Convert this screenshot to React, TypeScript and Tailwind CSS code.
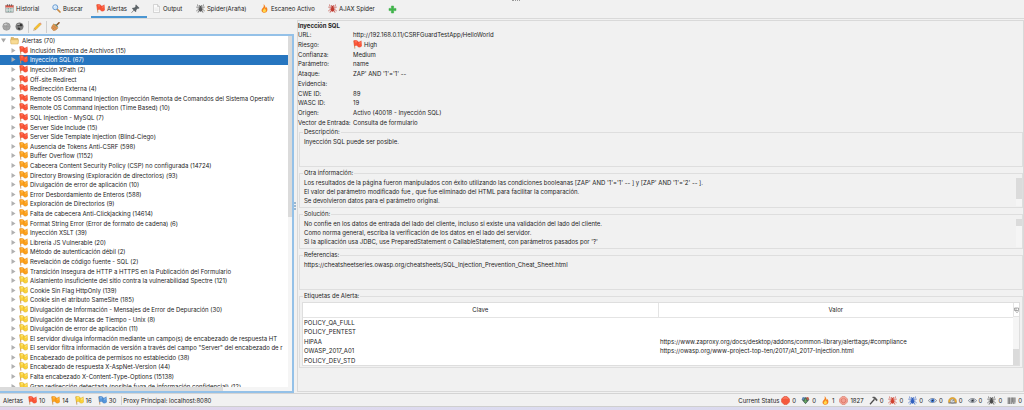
import React, { useState } from 'react';

type Level = 'high' | 'medium' | 'low' | 'info';

const flagColors: Record<Level, { fill: string; dark: string; light: string }> = {
  high: { fill: '#fb5537', dark: '#e0472e', light: '#ff8a70' },
  medium: { fill: '#fda21d', dark: '#dc8616', light: '#ffc766' },
  low: { fill: '#fbd23a', dark: '#d0a420', light: '#fff0a0' },
  info: { fill: '#5596dc', dark: '#3a6fae', light: '#9cc6f2' },
};

const alerts: { name: string; level: Level }[] = [
  { name: 'Inclusión Remota de Archivos (15)', level: 'high' },
  { name: 'Inyección SQL (67)', level: 'high' },
  { name: 'Inyección XPath (2)', level: 'high' },
  { name: 'Off-site Redirect', level: 'high' },
  { name: 'Redirección Externa (4)', level: 'high' },
  { name: 'Remote OS Command Injection (Inyección Remota de Comandos del Sistema Operativ', level: 'high' },
  { name: 'Remote OS Command Injection (Time Based) (10)', level: 'high' },
  { name: 'SQL Injection - MySQL (7)', level: 'high' },
  { name: 'Server Side Include (15)', level: 'high' },
  { name: 'Server Side Template Injection (Blind-Ciego)', level: 'high' },
  { name: 'Ausencia de Tokens Anti-CSRF (598)', level: 'medium' },
  { name: 'Buffer Overflow (1152)', level: 'medium' },
  { name: 'Cabecera Content Security Policy (CSP) no configurada (14724)', level: 'medium' },
  { name: 'Directory Browsing (Exploración de directorios) (93)', level: 'medium' },
  { name: 'Divulgación de error de aplicación (10)', level: 'medium' },
  { name: 'Error Desbordamiento de Enteros (588)', level: 'medium' },
  { name: 'Exploración de Directorios (9)', level: 'medium' },
  { name: 'Falta de cabecera Anti-Clickjacking (14614)', level: 'medium' },
  { name: 'Format String Error (Error de formato de cadena) (6)', level: 'medium' },
  { name: 'Inyección XSLT (39)', level: 'medium' },
  { name: 'Librería JS Vulnerable (20)', level: 'medium' },
  { name: 'Método de autenticación débil (2)', level: 'medium' },
  { name: 'Revelación de código fuente - SQL (2)', level: 'medium' },
  { name: 'Transición Insegura de HTTP a HTTPS en la Publicación del Formulario', level: 'medium' },
  { name: 'Aislamiento insuficiente del sitio contra la vulnerabilidad Spectre (121)', level: 'low' },
  { name: 'Cookie Sin Flag HttpOnly (139)', level: 'low' },
  { name: 'Cookie sin el atributo SameSite (185)', level: 'low' },
  { name: 'Divulgación de Información - Mensajes de Error de Depuración (30)', level: 'low' },
  { name: 'Divulgación de Marcas de Tiempo - Unix (8)', level: 'low' },
  { name: 'Divulgación de error de aplicación (11)', level: 'low' },
  { name: 'El servidor divulga información mediante un campo(s) de encabezado de respuesta HT', level: 'low' },
  { name: 'El servidor filtra información de versión a través del campo "Server" del encabezado de r', level: 'low' },
  { name: 'Encabezado de política de permisos no establecido (38)', level: 'low' },
  { name: 'Encabezado de respuesta X-AspNet-Version (44)', level: 'low' },
  { name: 'Falta encabezado X-Content-Type-Options (15138)', level: 'low' },
  { name: 'Gran redirección detectada (posible fuga de información confidencial) (12)', level: 'low' },
];

const details = [
  { label: 'URL:', value: 'http://192.168.0.11/CSRFGuardTestApp/HelloWorld' },
  { label: 'Riesgo:', value: 'High', flag: true },
  { label: 'Confianza:', value: 'Medium' },
  { label: 'Parámetro:', value: 'name' },
  { label: 'Ataque:', value: "ZAP' AND '1'='1' --" },
  { label: 'Evidencia:', value: '' },
  { label: 'CWE ID:', value: '89' },
  { label: 'WASC ID:', value: '19' },
  { label: 'Origen:', value: 'Activo (40018 - Inyección SQL)' },
  { label: 'Vector de Entrada:', value: 'Consulta de formulario' },
];

const tags = [
  { key: 'POLICY_QA_FULL', value: '' },
  { key: 'POLICY_PENTEST', value: '' },
  { key: 'HIPAA', value: 'https://www.zaproxy.org/docs/desktop/addons/common-library/alerttags/#compliance' },
  { key: 'OWASP_2017_A01', value: 'https://owasp.org/www-project-top-ten/2017/A1_2017-Injection.html' },
  { key: 'POLICY_DEV_STD', value: '' },
];

const Flag = ({ level }: { level: Level }) => {
  const c = flagColors[level];
  return (
    <svg viewBox="0 0 18 18" className="w-[9px] h-[9px] shrink-0">
      <path d="M.8 1.5 L2.8 1 L4.8 17 L2.8 17.5 Z" fill="#c99a6a" />
      <path d="M1.5 1.5 C4.5 0 8 .5 9.8 2.5 L10.8 12.5 C8 10.5 5.5 10.5 2.8 12 Z" fill={c.fill} stroke={c.dark} strokeWidth=".6" />
      <path d="M9.6 3.5 C12 4.5 14.5 3.5 16.5 1.5 L17.6 12 C15 14.5 12 15 9.6 13.5 Z" fill={c.fill} stroke={c.dark} strokeWidth=".6" />
      <path d="M4 4 C5.5 3.2 7 3.4 8 4 M12 6.5 C13.5 6.5 14.5 6 15.5 5.3" fill="none" stroke={c.light} strokeWidth="1.6" />
    </svg>
  );
};

const Spider = ({ color }: { color: string }) => (
  <svg viewBox="0 0 18 18" className="w-[9px] h-[9px] shrink-0">
    <g stroke={color} strokeWidth="1.3" fill="none">
      <path d="M7 8 L4 5 L3 1 M11 8 L14 5 L15 1 M7 9 L3 7.5 L.5 6 M11 9 L15 7.5 L17.5 6" />
      <path d="M7 11 L3 12 L.5 14 M11 11 L15 12 L17.5 14 M8 12 L5 14 L4 17.5 M10 12 L13 14 L14 17.5 M7.5 5 L6.5 2 M10.5 5 L11.5 2" />
    </g>
    <ellipse cx="9" cy="11" rx="3.4" ry="4.6" fill={color} />
    <circle cx="9" cy="6" r="2.4" fill={color} />
  </svg>
);

const Flame = () => (
  <svg viewBox="0 0 18 18" className="w-[9px] h-[9px] shrink-0">
    <path d="M7 .5 C12 4 9.5 6 12 8 C12.5 7 12.5 6 12.5 5.5 C17 11 14.5 17.5 9 17.5 C3 17.5 1.5 12 5 8.5 C8 5.5 8 3 7 .5 Z" fill="#f5821f" />
    <path d="M9 8 C11 11 13 12 11.5 15 C10 17.5 6 17 5.5 14 C5.2 11.5 8.5 11 9 8 Z" fill="#ffd84a" />
  </svg>
);

const Eye = ({ color }: { color: string }) => (
  <svg viewBox="0 0 18 18" className="w-[9px] h-[9px] shrink-0">
    <path d="M.8 9.5 C4 3.5 14 3.5 17.2 9.5 C14 14 4 14 .8 9.5 Z" fill="#e9eef4" stroke="#6e7681" strokeWidth="1.5" />
    <circle cx="9" cy="9" r="4" fill={color} />
    <circle cx="9" cy="9" r="1.6" fill="#151b26" />
    <circle cx="7.7" cy="7.5" r="1" fill="#fff" />
  </svg>
);

const CalendarIcon = () => (
  <svg viewBox="0 0 18 18" className="w-[9px] h-[9px] shrink-0">
    <rect x="1" y="2.5" width="16" height="14.5" rx="1" fill="#e8e8e8" stroke="#8b8b8b" />
    <rect x="1" y="2.5" width="16" height="4.5" fill="#d65a4c" />
    <path d="M5 .5 V4 M9 .5 V4 M13 .5 V4" stroke="#555" strokeWidth="1.5" />
    <path d="M3 9 H15 M3 12 H15 M3 15 H15" stroke="#5e8f86" strokeWidth="1.7" strokeDasharray="2 1.3" />
  </svg>
);

const SearchIcon = () => (
  <svg viewBox="0 0 18 18" className="w-[9px] h-[9px] shrink-0">
    <path d="M10 10 L16 16" stroke="#c98b45" strokeWidth="3.4" strokeLinecap="round" />
    <circle cx="6.5" cy="6.5" r="5" fill="#cfe6fa" stroke="#6a9bd0" strokeWidth="2" />
    <path d="M4 6 C4.3 4.5 5.3 4 6.5 3.8" stroke="#fff" strokeWidth="1.4" fill="none" />
  </svg>
);

const PinIcon = () => (
  <svg viewBox="0 0 18 18" className="w-[9px] h-[9px] shrink-0">
    <path d="M10 1 L17 8 L15 9.5 L13.5 9 L10.5 12 L10.5 15 L9 16 L2 9 L3.5 7.5 L6.5 7.5 L9.3 4.5 L8.7 2.5 Z" fill="#5d6468" />
    <path d="M6 12 L1 17.5" stroke="#777" strokeWidth="1.6" />
  </svg>
);

const PageIcon = () => (
  <svg viewBox="0 0 18 18" className="w-[9px] h-[9px] shrink-0">
    <path d="M3 1 H11 L15 5 V17 H3 Z" fill="#fbfbfb" stroke="#b4b4b4" />
    <path d="M11 1 V5 H15" fill="#e2e2e2" stroke="#b4b4b4" />
    <path d="M5 8 H13 M5 10.5 H13 M5 13 H13" stroke="#dcdcdc" />
  </svg>
);

const PlusIcon = () => (
  <svg viewBox="0 0 18 18" className="w-[9px] h-[9px] shrink-0">
    <path d="M6.8 2 H11.2 V6.8 H16 V11.2 H11.2 V16 H6.8 V11.2 H2 V6.8 H6.8 Z" fill="#3fb549" stroke="#35ab42" strokeLinejoin="round" />
  </svg>
);

const Globe = ({ dark }: { dark?: boolean }) => (
  <svg viewBox="0 0 18 18" className="w-[9px] h-[9px] shrink-0">
    <circle cx="9" cy="9" r="7.5" fill={dark ? '#7d7d7d' : '#b5b5b5'} stroke="#7a7a7a" />
    {dark ? (
      <path d="M4 4 C7 2 8 5 10 4 C13 3 14 5 15 7 L12 9 L9 7 L6 9 Z M5 12 L8 11 L11 14 L8 16 Z" fill="#333" />
    ) : (
      <path d="M3 6 H15 M2 9 H16 M3 12 H15 M6 3 V15 M9 2 V16 M12 3 V15" stroke="#8c8c8c" strokeWidth=".8" />
    )}
    <ellipse cx="7" cy="5" rx="3" ry="1.5" fill="#e2e2e2" opacity=".7" />
  </svg>
);

const PencilIcon = () => (
  <svg viewBox="0 0 18 18" className="w-[9px] h-[9px] shrink-0">
    <path d="M1 17 L2.5 12.5 L5.5 15.5 Z" fill="#e8c9a0" stroke="#8f6b3f" strokeWidth=".6" />
    <path d="M2.5 12.5 L13 2 L16 5 L5.5 15.5 Z" fill="#f7c02c" stroke="#c68d16" strokeWidth=".8" />
    <path d="M13 2 L14.5 .8 L17.2 3.5 L16 5 Z" fill="#e08a7a" />
  </svg>
);

const BroomIcon = () => (
  <svg viewBox="0 0 18 18" className="w-[9px] h-[9px] shrink-0">
    <path d="M10.5 7 L16 1.5" stroke="#8a5528" strokeWidth="3.2" strokeLinecap="round" />
    <path d="M6 3.5 L14 11.5 C12 15 8 17.5 5 17.5 L.5 12 C2 9 3 5 6 3.5 Z" fill="#e0984e" stroke="#a8682e" strokeWidth=".8" />
    <path d="M3 11 L7 15 M5 8 L10 13" stroke="#b0705c" strokeWidth="1.3" />
    <path d="M7.5 4 L13.5 10" stroke="#5d8f63" strokeWidth="1.8" />
  </svg>
);

const FolderIcon = () => (
  <svg viewBox="0 0 18 18" className="w-[9px] h-[9px] shrink-0">
    <path d="M2 3 H7 L9 5 H16 V15 H2 Z" fill="#e4bb66" stroke="#c79d4c" />
    <path d="M1 7.5 H17 L16 16 H2 Z" fill="#f8db94" stroke="#d4ad5c" />
  </svg>
);

const Burst = ({ pale }: { pale?: boolean }) => (
  <svg viewBox="0 0 18 18" className="w-[9px] h-[9px] shrink-0">
    <path d="M6 1 H12 L17 6 V12 L12 17 H6 L1 12 V6 Z" fill={pale ? '#f0a093' : '#f4583c'} stroke={pale ? '#d9705f' : '#e0452c'} strokeLinejoin="round" />
    {pale && <circle cx="9" cy="9" r="4.5" fill="none" stroke="#d9705f" strokeWidth="1.5" />}
    <path d="M5 5 C7 3.3 11 3.3 13 5" fill="none" stroke="#ffb3a2" strokeWidth="1.3" />
  </svg>
);

const DownloadIcon = () => (
  <svg viewBox="0 0 18 18" className="w-[9px] h-[9px] shrink-0">
    <path d="M1 7 L9 2 L17 7 L9 16 Z" fill="#5b6f7d" />
    <circle cx="5" cy="5" r="3" fill="#5c86b5" />
    <circle cx="13" cy="5" r="3" fill="#c05f4b" />
    <path d="M7 5 H11 V9 H14 L9 15 L4 9 H7 Z" fill="#68a862" stroke="#30463a" strokeWidth=".8" />
  </svg>
);

const HammerIcon = () => (
  <svg viewBox="0 0 18 18" className="w-[9px] h-[9px] shrink-0">
    <path d="M2 16.5 L11 6.5" stroke="#4b4b4b" strokeWidth="2.4" />
    <path d="M6 2.5 C10 .5 13 2 15 5 L17.5 8 L15 10.5 L12.5 7.5 L9.5 5 Z" fill="#5a5a5a" />
  </svg>
);

const SunCloud = () => (
  <svg viewBox="0 0 18 18" className="w-[9px] h-[9px] shrink-0">
    <path d="M1 11 C1 6 5 3 9 3 C13 3 17 6 17 11 V13 H1 Z" fill="#f2b12e" stroke="#bb7e1d" />
    <circle cx="9" cy="10.5" r="4.3" fill="#d8dce2" stroke="#7a7f88" />
    <path d="M9 10.5 L11.5 7.5" stroke="#333" strokeWidth="1.3" />
    <path d="M1 14 H17" stroke="#70757d" strokeWidth="2" />
  </svg>
);

const BarsIcon = () => (
  <svg viewBox="0 0 18 18" className="w-[9px] h-[9px] shrink-0">
    <rect x="1" y="3" width="16" height="13" fill="#c9c9c9" />
    <path d="M2.5 3 V16 M5 3 V16 M8.5 3 V16 M11 3 V13 M13.5 3 V16 M16 3 V13" stroke="#666" strokeWidth="1.4" />
  </svg>
);

const tabs = [
  { label: 'Historial', icon: <CalendarIcon />, width: 'w-[47px]' },
  { label: 'Buscar', icon: <SearchIcon />, width: 'w-[44px]' },
  { label: 'Alertas', icon: <Flag level="high" />, width: 'w-[56px]', pinned: true },
  { label: 'Output', icon: <PageIcon />, width: 'w-[44px]' },
  { label: 'Spider(Araña)', icon: <Spider color="#555" />, width: 'w-[64px]' },
  { label: 'Escaneo Activo', icon: <Flame />, width: 'w-[68px]' },
  { label: 'AJAX Spider', icon: <Spider color="#c0392f" />, width: 'w-[60px]' },
];

const scans = [
  { icon: <Burst />, count: 0 },
  { icon: <DownloadIcon />, count: 0 },
  { icon: <Flame />, count: 1 },
  { icon: <Burst pale />, count: 1827 },
  { icon: <HammerIcon />, count: 0 },
  { icon: <Spider color="#d0402f" />, count: 0 },
  { icon: <Spider color="#2f5fc0" />, count: 0 },
  { icon: <Eye color="#3a74d0" />, count: 0 },
  { icon: <SunCloud />, count: 0 },
  { icon: <Eye color="#7b8087" />, count: 0 },
  { icon: <Spider color="#4a4a4a" />, count: 0 },
  { icon: <BarsIcon />, count: 0 },
];

const Group = ({ title, thumb, children }: { title: string; thumb?: string; children: React.ReactNode }) => (
  <fieldset className="min-w-0 h-10 border border-[#dedede]">
    <legend className="ml-[3px] px-px leading-[10px]">{title}</legend>
    <div className="flex justify-between pl-1">
      <div className="leading-[9px] whitespace-nowrap">{children}</div>
      {thumb && (
        <div className="w-[6px] h-[28px] bg-[#f5f5f5]">
          <div className={`w-full bg-[#dbdbdb] ${thumb}`} />
        </div>
      )}
    </div>
  </fieldset>
);

export default function App() {
  const [activeTab, setActiveTab] = useState('Alertas');
  const [selected, setSelected] = useState('Inyección SQL (67)');

  return (
    <div className="h-screen flex flex-col overflow-hidden bg-[#f1f1f1] text-[#222222] text-[6px] leading-[9px] font-[Inter,Arial,sans-serif]">
      {/* Tabs */}
      <nav className="relative flex h-[19px] shrink-0 border-b border-[#d9d9d9]">
        {tabs.map(tab => (
          <button
            key={tab.label}
            onClick={() => setActiveTab(tab.label)}
            className={`flex items-center gap-[2px] pl-[5px] whitespace-nowrap border-b-2 ${tab.width} ${tab.label === activeTab ? 'border-[#4a96d2]' : 'border-transparent'}`}
          >
            {tab.icon}
            {tab.label}
            {tab.pinned && <span className="pl-[2px]"><PinIcon /></span>}
          </button>
        ))}
        <button aria-label="Añadir" className="pl-[5px]"><PlusIcon /></button>
        <span className="absolute left-1/2 top-0 w-2 border-t border-dotted border-[#999]" />
      </nav>

      <main className="flex flex-1 min-h-0">
        {/* Alert tree */}
        <section className="w-[294px] shrink-0 flex flex-col">
          <div className="flex items-center h-[15px] shrink-0 pl-[2px] gap-[4px]">
            <button aria-label="Ámbito"><Globe /></button>
            <button aria-label="Sitios"><Globe dark /></button>
            <span className="h-3 border-l border-[#cfcfcf]" />
            <button aria-label="Editar"><PencilIcon /></button>
            <span className="h-3 border-l border-[#cfcfcf]" />
            <button aria-label="Limpiar"><BroomIcon /></button>
          </div>
          <div className="flex flex-1 min-h-0 border-2 border-l-0 border-[#94c1e8] bg-white">
            <div className="flex-1 min-w-0 flex flex-col">
              <div className="flex-1 min-h-0 overflow-hidden flex flex-col">
                <ul className="flex-1 shrink-0 -mb-1 flex flex-col whitespace-nowrap">
                  <li className="flex-1 min-h-0 flex items-center gap-[3px] pl-[1px]">
                    <svg viewBox="0 0 10 10" className="w-[5px] h-[5px]"><path d="M0 1 H10 L5 9 Z" fill="#a5a5a5" /></svg>
                    <span className="pl-px"><FolderIcon /></span>
                    Alertas (70)
                  </li>
                  {alerts.map(alert => (
                    <li key={alert.name} className={`flex-1 min-h-0 flex ${alert.name === selected ? 'bg-[#2675bf] text-white' : ''}`}>
                      <button onClick={() => setSelected(alert.name)} className="flex items-center flex-1 gap-[2px] pl-[11px]">
                        <svg viewBox="0 0 10 10" className="w-[5px] h-[5px] mr-px shrink-0"><path d="M1 0 L9 5 L1 10 Z" fill="#b0b0b0" /></svg>
                        <Flag level={alert.level} />
                        {alert.name}
                      </button>
                    </li>
                  ))}
                </ul>
              </div>
              <div className="h-[4px] shrink-0 bg-[#f5f5f5]"><div className="h-full w-[223px] bg-[#dbdbdb]" /></div>
            </div>
            <div className="w-[4px] bg-[#f5f5f5]"><div className="h-[181px] bg-[#dbdbdb]" /></div>
          </div>
        </section>

        <div className="w-[3px] shrink-0 flex items-center"><span className="h-2 border-l-2 border-dotted border-[#9db8d0]" /></div>

        {/* Alert details */}
        <section className="flex-1 min-w-0 flex flex-col mt-px border border-[#d9d9d9] mb-px">
          <div className="h-[106px] shrink-0 flex flex-col">
            <h2 className="flex-1 font-bold">Inyección SQL</h2>
            <dl className="h-[97px] flex flex-col">
              {details.map(row => (
                <div key={row.label} className="flex-1 min-h-0 flex items-center">
                  <dt className="w-[55px] whitespace-nowrap">{row.label}</dt>
                  <dd className="flex items-center gap-[2px]">
                    {row.flag && <Flag level="high" />}
                    {row.value}
                  </dd>
                </div>
              ))}
            </dl>
          </div>
          <div className="flex flex-col gap-px pl-px">
            <Group title="Descripción:">Inyección SQL puede ser posible.</Group>
            <Group title="Otra información:" thumb="h-[21px]">
              <p>Los resultados de la página fueron manipulados con éxito utilizando las condiciones booleanas [ZAP' AND '1'='1' -- ] y [ZAP' AND '1'='2' -- ].</p>
              <p>El valor del parámetro modificado fue , que fue eliminado del HTML para facilitar la comparación.</p>
              <p>Se devolvieron datos para el parámetro original.</p>
            </Group>
            <Group title="Solución:" thumb="h-[7px]">
              <p>No confíe en los datos de entrada del lado del cliente, incluso si existe una validación del lado del cliente.</p>
              <p>Como norma general, escriba la verificación de los datos en el lado del servidor.</p>
              <p>Si la aplicación usa JDBC, use PreparedStatement o CallableStatement, con parámetros pasados por '?'</p>
            </Group>
            <Group title="Referencias:">https://cheatsheetseries.owasp.org/cheatsheets/SQL_Injection_Prevention_Cheat_Sheet.html</Group>
            <fieldset className="min-w-0 h-[77px] border border-[#dedede] pl-[2px] pr-[2px]">
              <legend className="ml-px px-px leading-[10px]">Etiquetas de Alerta:</legend>
              <div className="flex mt-px h-[64px] border border-[#dedede] bg-white">
                <table className="flex-1 h-full table-fixed border-collapse">
                  <thead>
                    <tr className="h-[14px] border-b border-[#e4e4e4]">
                      <th className="w-1/2 p-0 font-normal border-r border-[#e4e4e4]">Clave</th>
                      <th className="w-1/2 p-0 font-normal">Valor</th>
                    </tr>
                  </thead>
                  <tbody>
                    {tags.map(tag => (
                      <tr key={tag.key}>
                        <td className="py-0 pl-px">{tag.key}</td>
                        <td className="py-0 pl-[2px] whitespace-nowrap">{tag.value}</td>
                      </tr>
                    ))}
                  </tbody>
                </table>
                <div className="w-[6px] flex flex-col">
                  <button aria-label="Columnas" className="h-[14px] border-l border-b border-[#e4e4e4]">
                    <svg viewBox="0 0 10 10" className="w-[5px] h-[6px]"><path d="M1 1 H9 V6 H1 Z M4 1 V6 M3 8 L6 10 L9 8" fill="none" stroke="#777" strokeWidth="1.2" /></svg>
                  </button>
                  <div className="flex-1 bg-[#f5f5f5] flex flex-col justify-end"><div className="h-4 bg-[#dbdbdb]" /></div>
                </div>
              </div>
            </fieldset>
          </div>
        </section>
      </main>

      {/* Status bar */}
      <footer className="h-[13px] shrink-0 flex items-center border-t border-[#d4d4d4] pl-[3px] pr-[2px] whitespace-nowrap">
        <span className="pr-[5px]">Alertas</span>
        <div className="flex gap-[6px] pr-[5px] border-r border-[#cfcfcf]">
          <span className="flex items-center gap-[2px]"><Flag level="high" />10</span>
          <span className="flex items-center gap-[2px]"><Flag level="medium" />14</span>
          <span className="flex items-center gap-[2px]"><Flag level="low" />16</span>
          <span className="flex items-center gap-[2px]"><Flag level="info" />30</span>
        </div>
        <span className="pl-px">Proxy Principal: localhost:8080</span>
        <div className="ml-auto flex items-center gap-[2px]">
          <span>Current Status</span>
          <div className="flex gap-[5px]">
            {scans.map((scan, i) => (
              <span key={i} className="flex items-center gap-[2px]">{scan.icon}{scan.count}</span>
            ))}
          </div>
        </div>
      </footer>
      <div className="h-[4px] shrink-0 border-t border-[#cfcfcf] bg-linear-to-r from-[#e2d3ea] via-[#dcdcf0] to-[#d9d6ec]" />
    </div>
  );
}
